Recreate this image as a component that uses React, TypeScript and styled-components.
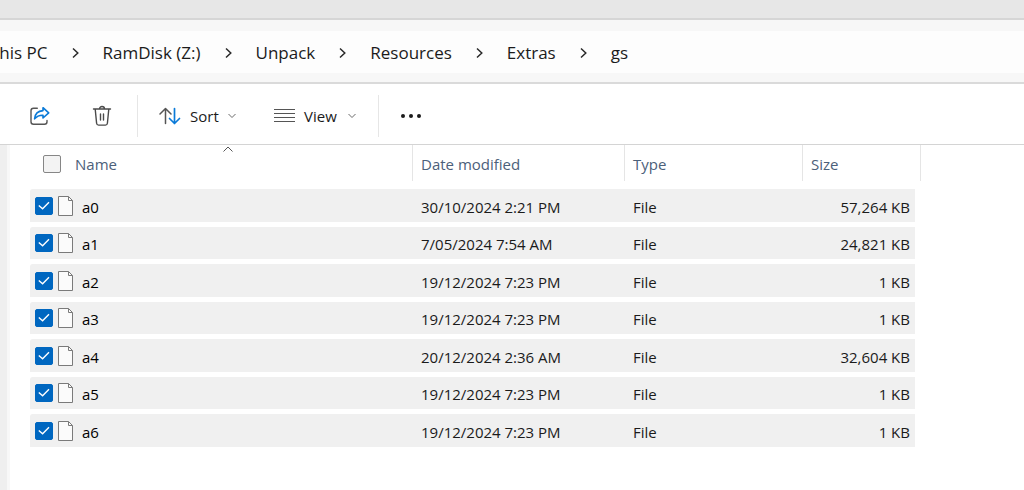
import React from "react";
import styled, { createGlobalStyle } from "styled-components";

const GlobalStyle = createGlobalStyle`
  *, *::before, *::after { box-sizing: border-box; }
  body {
    margin: 0;
    background: #fff;
    color: #1b1b1b;
    font-family: "Open Sans", "Noto Sans", sans-serif;
    font-size: 15px;
    line-height: 20px;
    overflow-x: hidden;
  }
`;

const Window = styled.div`
  display: flex;
  flex-direction: column;
  min-height: 100vh;
`;

const TitleBar = styled.div`
  height: 20px;
  background: #e7e7e7;
  border-bottom: 2px solid #d6d6d6;
`;

const AddressArea = styled.div`
  padding: 11px 0 9px;
  background: #f7f7f7;
  border-bottom: 2px solid #dadada;
`;

const AddressBar = styled.nav`
  height: 42px;
  background: #fdfdfd;
  overflow: hidden;
`;

const Crumbs = styled.ol`
  display: flex;
  align-items: center;
  gap: 24px;
  height: 100%;
  margin: 0 0 0 -10px;
  padding: 2px 0 0;
  list-style: none;
`;

const Crumb = styled.li`
  display: flex;
  align-items: center;
  gap: 24px;
`;

const CrumbLink = styled.a`
  color: #1b1b1b;
  font-size: 17px;
  line-height: 24px;
  text-decoration: none;
  white-space: nowrap;
`;

const Toolbar = styled.div`
  display: flex;
  align-items: center;
  height: 61px;
  padding: 3px 24px 0;
  border-bottom: 1px solid #d4d4d4;
`;

const ToolButton = styled.button<{ $gapAfter?: number }>`
  display: flex;
  align-items: center;
  gap: 9px;
  height: 36px;
  margin: 0 ${(p) => p.$gapAfter ?? 0}px 0 0;
  padding: 0 5px;
  border: 0;
  border-radius: 4px;
  background: transparent;
  color: #1b1b1b;
  font: inherit;
  &:hover { background: #f3f3f3; }
`;

const ButtonLabel = styled.span<{ $width: number }>`
  width: ${(p) => p.$width}px;
  text-align: left;
  white-space: nowrap;
`;

const Divider = styled.span`
  width: 1px;
  height: 42px;
  margin-right: 16px;
  background: #e6e6e6;
`;

const Body = styled.div`
  display: flex;
  flex: 1;
`;

const SidebarEdge = styled.div`
  flex: none;
  width: 10px;
  background: #f8f8f8;
  border-left: 7px solid #efefef;
`;

const FileList = styled.main`
  flex: 1;
  padding-left: 20px;
`;

const Table = styled.table`
  width: 891px;
  table-layout: fixed;
  border-spacing: 0;
`;

const HeadCell = styled.th<{ $width: number; $lead?: boolean }>`
  position: relative;
  width: ${(p) => p.$width}px;
  height: 36px;
  padding: 1px 8px 0 ${(p) => (p.$lead ? 13 : 8)}px;
  border-right: 1px solid #e5e5e5;
  color: #4c607a;
  font-weight: 400;
  text-align: left;
`;

const NameHeading = styled.span`
  display: flex;
  align-items: center;
  gap: 14px;
`;

const SortMark = styled.svg`
  position: absolute;
  top: 1px;
  left: 0;
  right: 0;
  margin: 0 auto;
  padding-left: 14px;
  width: 24px;
  height: 7px;
`;

const SpacerCell = styled.td`
  height: 8px;
  padding: 0;
`;

const Row = styled.tr`
  height: 37px;
  &:nth-child(odd) { height: 38px; }
`;

const Cell = styled.td<{ $numeric?: boolean }>`
  padding: 2px ${(p) => (p.$numeric ? 5 : 8)}px 0 8px;
  border: 0 solid transparent;
  border-width: 0 ${(p) => (p.$numeric ? 6 : 0)}px 5px 0;
  background: #f0f0f0;
  background-clip: padding-box;
  text-align: ${(p) => (p.$numeric ? "right" : "left")};
  white-space: nowrap;
`;

const NameCell = styled(Cell)`
  padding: 0 0 0 5px;
  border-top-left-radius: 2px;
`;

const NameGroup = styled.label`
  display: flex;
  align-items: center;
`;

const FileName = styled.span`
  padding: 2px 0 0 9px;
  color: #000;
`;

const CheckFrame = styled.span`
  display: grid;
  flex: none;
  width: 18px;
  height: 18px;
  > * { grid-area: 1 / 1; }
  > svg { pointer-events: none; }
`;

const CheckInput = styled.input`
  appearance: none;
  width: 18px;
  height: 18px;
  margin: 0;
  border: 1px solid #868686;
  border-radius: 2px;
  background: #f3f3f3;
  &:checked { border-color: #0067c0; background: #0067c0; }
  & + svg { visibility: hidden; }
  &:checked + svg { visibility: visible; }
`;

const FileIcon = styled.svg`
  flex: none;
  margin-left: 5px;
`;

function Check(props: { label: string; checked?: boolean }) {
  return (
    <CheckFrame>
      <CheckInput type="checkbox" aria-label={props.label} defaultChecked={props.checked} />
      <svg width="18" height="18" viewBox="0 0 18 18" fill="none" stroke="#fff" strokeWidth="1.4">
        <path d="M3.8 8.4 7.6 11.800 14 5.300" />
      </svg>
    </CheckFrame>
  );
}

function DocumentIcon() {
  return (
    <FileIcon width="15" height="20" viewBox="0 0 15 20" aria-hidden="true">
      <path d="M.5.5h10l4 4v15H.5z" fill="#fbfbfb" stroke="#7a7a7a" />
      <path d="M10.5.5v4h4" fill="none" stroke="#7a7a7a" />
    </FileIcon>
  );
}

function ChevronRight() {
  return (
    <svg width="7" height="12" viewBox="0 0 7 12" fill="none" stroke="#2a2a2a" strokeWidth="1.5" aria-hidden="true">
      <path d="M1 1.5 5.8 6 1 10.5" />
    </svg>
  );
}

function ChevronDown() {
  return (
    <svg width="8" height="6" viewBox="0 0 8 6" fill="none" stroke="#6a6a6a" aria-hidden="true">
      <path d="M.5 1 4 4.5 7.5 1" />
    </svg>
  );
}

const crumbs = ["This PC", "RamDisk (Z:)", "Unpack", "Resources", "Extras", "gs"];

const files = [
  { name: "a0", modified: "30/10/2024 2:21 PM", size: "57,264 KB" },
  { name: "a1", modified: "7/05/2024 7:54 AM", size: "24,821 KB" },
  { name: "a2", modified: "19/12/2024 7:23 PM", size: "1 KB" },
  { name: "a3", modified: "19/12/2024 7:23 PM", size: "1 KB" },
  { name: "a4", modified: "20/12/2024 2:36 AM", size: "32,604 KB" },
  { name: "a5", modified: "19/12/2024 7:23 PM", size: "1 KB" },
  { name: "a6", modified: "19/12/2024 7:23 PM", size: "1 KB" },
];

export default function App() {
  return (
    <Window>
      <GlobalStyle />
      <TitleBar />
      <AddressArea>
        <AddressBar aria-label="Address">
          <Crumbs>
            {crumbs.map((name, i) => (
              <Crumb key={name}>
                <CrumbLink href="#">{name}</CrumbLink>
                {i < crumbs.length - 1 && <ChevronRight />}
              </Crumb>
            ))}
          </Crumbs>
        </AddressBar>
      </AddressArea>
      <Toolbar role="toolbar">
        <ToolButton aria-label="Share" $gapAfter={32}>
          <svg width="21" height="20" viewBox="0 0 21 20" fill="none" strokeWidth="1.4" strokeLinejoin="round" strokeLinecap="round">
            <path d="M8.300 2.300H4.500A2.500 2.500 0 0 0 2 4.800v11a2.500 2.500 0 0 0 2.500 2.500h11a2.500 2.500 0 0 0 2.500-2.500V14.500" stroke="#555" />
            <path d="M14 1.700 19.700 6.900 14 12V9.200C10.200 9 7.800 10.200 5.600 12.800 6 8.200 9 4.900 14 4.600z" stroke="#0a7ad8" strokeWidth="1.6" />
          </svg>
        </ToolButton>
        <ToolButton aria-label="Delete" $gapAfter={20}>
          <svg width="20" height="22" viewBox="0 0 20 22" fill="none" stroke="#4a4a4a" strokeWidth="1.4" strokeLinecap="round">
            <path d="M1.500 4h17M7.500 4a2.500 2.500 0 0 1 5 0M3.200 4l1.400 14.300a2 2 0 0 0 2 1.800h6.800a2 2 0 0 0 2-1.800L16.800 4M8.500 9v6M11.500 9v6" />
          </svg>
        </ToolButton>
        <Divider />
        <ToolButton $gapAfter={27}>
          <svg width="22" height="20" viewBox="0 0 22 20" fill="none" strokeWidth="1.5" strokeLinecap="round" strokeLinejoin="round">
            <path d="M6.500 17.500V2.500M1 8 6.500 2.500 12 8" stroke="#555" />
            <path d="M15.500 2.500v15M10.500 12.500 15.500 17.500 20.500 12.500" stroke="#0a7ad8" strokeWidth="1.7" />
          </svg>
          <ButtonLabel $width={29}>Sort</ButtonLabel>
          <ChevronDown />
        </ToolButton>
        <ToolButton $gapAfter={17}>
          <svg width="22" height="16" viewBox="0 0 22 16" stroke="#555">
            <path d="M1 1.500h21M1 5.500h21M1 9.500h21M1 13.500h21" />
          </svg>
          <ButtonLabel $width={35}>View</ButtonLabel>
          <ChevronDown />
        </ToolButton>
        <Divider />
        <ToolButton aria-label="See more">
          <svg width="22" height="6" viewBox="0 0 22 6" fill="#1b1b1b">
            <circle cx="3" cy="3" r="2" />
            <circle cx="11" cy="3" r="2" />
            <circle cx="19" cy="3" r="2" />
          </svg>
        </ToolButton>
      </Toolbar>
      <Body>
        <SidebarEdge />
        <FileList>
          <Table>
            <thead>
              <tr>
                <HeadCell $width={383} $lead aria-sort="ascending">
                  <NameHeading>
                    <Check label="Select all" />
                    Name
                  </NameHeading>
                  <SortMark viewBox="0 0 10 7" fill="none" stroke="#555">
                    <path d="M.5 5.500 5 1 9.500 5.500" />
                  </SortMark>
                </HeadCell>
                <HeadCell $width={212}>Date modified</HeadCell>
                <HeadCell $width={178}>Type</HeadCell>
                <HeadCell $width={118}>Size</HeadCell>
              </tr>
              <tr aria-hidden="true">
                <SpacerCell colSpan={4} />
              </tr>
            </thead>
            <tbody>
              {files.map((file) => (
                <Row key={file.name}>
                  <NameCell>
                    <NameGroup>
                      <Check label={"Select " + file.name} checked />
                      <DocumentIcon />
                      <FileName>{file.name}</FileName>
                    </NameGroup>
                  </NameCell>
                  <Cell>{file.modified}</Cell>
                  <Cell>File</Cell>
                  <Cell $numeric>{file.size}</Cell>
                </Row>
              ))}
            </tbody>
          </Table>
        </FileList>
      </Body>
    </Window>
  );
}
